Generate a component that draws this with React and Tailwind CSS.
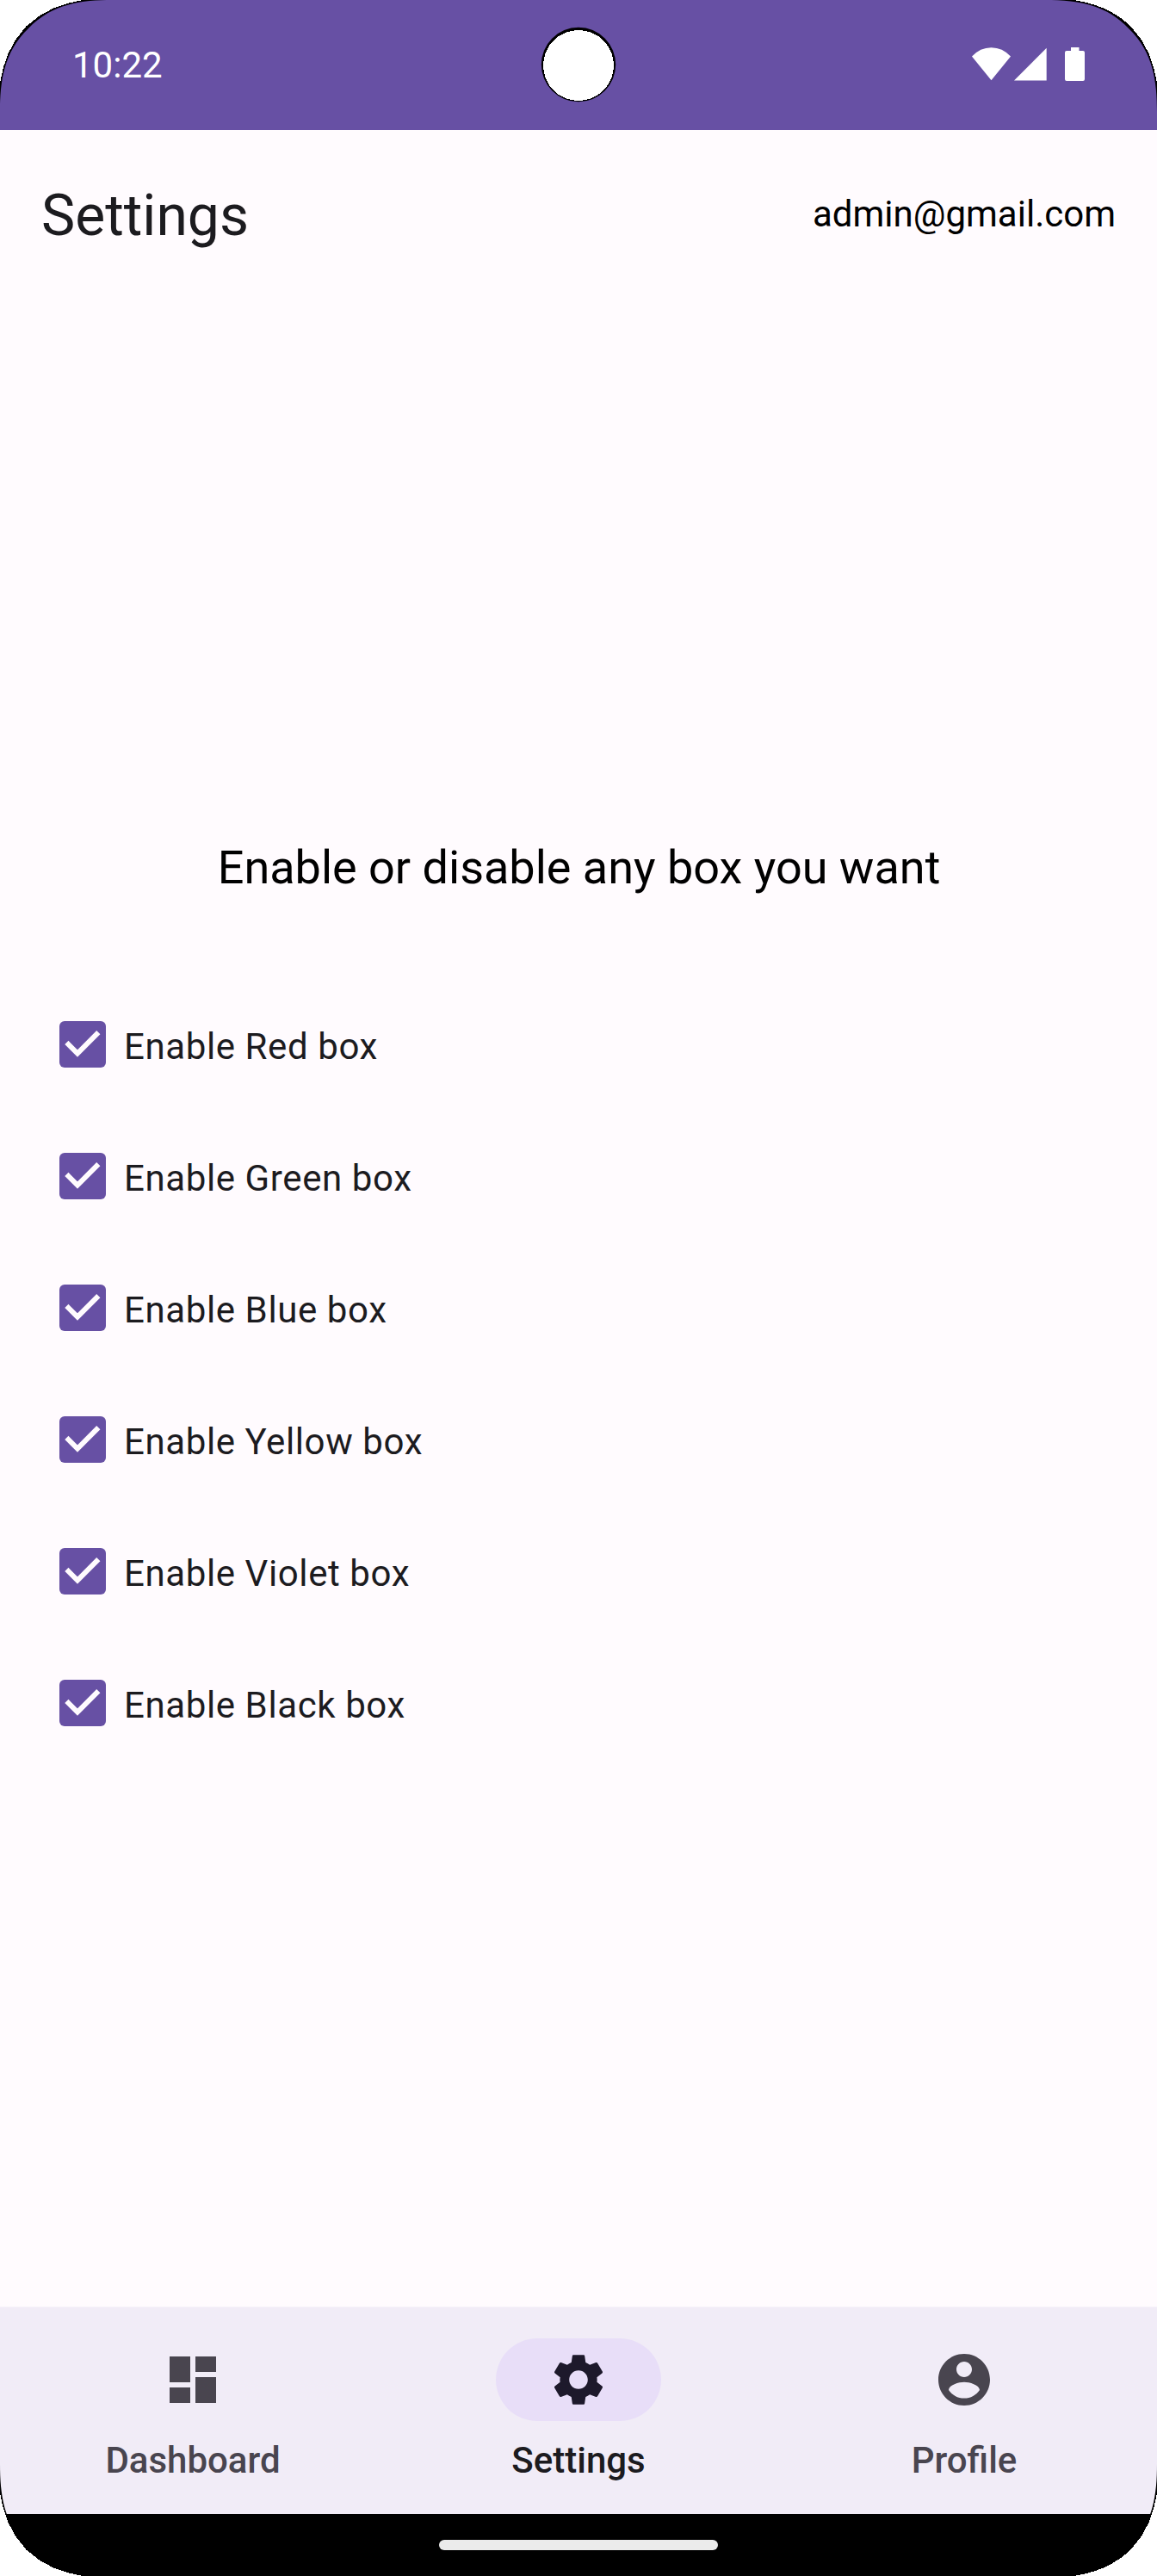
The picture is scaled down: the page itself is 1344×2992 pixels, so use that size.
import React from "react";

const boxes = ["Red", "Green", "Blue", "Yellow", "Violet", "Black"];

const tabs = [
  { label: "Dashboard", icon: "M3 13h8V3H3v10zm0 8h8v-6H3v6zm10 0h8V11h-8v10zm0-18v6h8V3h-8z" },
  {
    label: "Settings",
    active: true,
    icon: "M19.14 12.94c.04-.3.06-.61.06-.94 0-.32-.02-.64-.07-.94l2.03-1.58c.18-.14.23-.41.12-.61l-1.92-3.32c-.12-.22-.37-.29-.59-.22l-2.39.96c-.5-.38-1.03-.7-1.62-.94l-.36-2.54c-.04-.24-.24-.41-.48-.41h-3.84c-.24 0-.43.17-.47.41l-.36 2.54c-.59.24-1.13.57-1.62.94l-2.39-.96c-.22-.08-.47 0-.59.22L2.74 8.87c-.12.21-.08.47.12.61l2.03 1.58c-.05.3-.09.63-.09.94s.02.64.07.94l-2.03 1.58c-.18.14-.23.41-.12.61l1.92 3.32c.12.22.37.29.59.22l2.39-.96c.5.38 1.03.7 1.62.94l.36 2.54c.05.24.24.41.48.41h3.84c.24 0 .44-.17.47-.41l.36-2.54c.59-.24 1.13-.56 1.62-.94l2.39.96c.22.08.47 0 .59-.22l1.92-3.32c.12-.22.07-.47-.12-.61l-2.01-1.58zM12 15.6c-1.98 0-3.6-1.62-3.6-3.6s1.62-3.6 3.6-3.6 3.6 1.62 3.6 3.6-1.62 3.6-3.6 3.6z",
  },
  {
    label: "Profile",
    icon: "M12 2C6.48 2 2 6.48 2 12s4.48 10 10 10 10-4.48 10-10S17.52 2 12 2zm0 3c1.66 0 3 1.34 3 3s-1.34 3-3 3-3-1.34-3-3 1.34-3 3-3zm0 14.2c-2.5 0-4.71-1.28-6-3.22.03-1.99 4-3.08 6-3.08 1.99 0 5.97 1.09 6 3.08-1.29 1.94-3.5 3.22-6 3.22z",
  },
];

function Corner({ className }) {
  return (
    <svg className={`absolute h-[132px] w-[132px] ${className}`} viewBox="0 0 132 132">
      <path d="M0 0H130C95 0 61 4 33 33C4 61 0 95 0 130Z" fill="#000" />
      <path d="M0 0H96C72 4 50 12 30.500 30.500C12 50 4 72 0 96Z" fill="#fff" shapeRendering="crispEdges" />
    </svg>
  );
}

function StatusBar() {
  return (
    <header className="relative flex h-[151px] shrink-0 items-start justify-between bg-[#6750a4] px-[84px] text-white">
      <span className="mt-[51px] text-[42px] leading-[49px]">10:22</span>
      <svg className="absolute left-[627px] top-[30px]" width="90" height="90" viewBox="627 30 90 90">
        <circle cx="672" cy="75" r="43.2" fill="#000" />
        <circle cx="672" cy="76" r="41" fill="#fff" shapeRendering="crispEdges" />
      </svg>
      <svg className="mt-[54px]" width="132" height="42" viewBox="1128 54 132 42" fill="#fff">
        <path d="M1129 65.6Q1138.500 55.300 1151.500 55.300Q1164.500 55.300 1174 65.600L1151.500 93.200Z" />
        <path d="M1178 93.600H1215.700V55.800Z" />
        <path d="M1244 55h9.500v4h4.500q2 0 2 2v31q0 2-2 2h-19q-2 0-2-2v-31q0-2 2-2h5z" />
      </svg>
    </header>
  );
}

function CheckRow({ name }) {
  return (
    <label className="flex h-[54px] items-center">
      <svg className="mr-[21px] h-[54px] w-[54px]" viewBox="0 0 54 54">
        <rect width="54" height="54" rx="6" fill="#6750a4" />
        <path d="M10.500 27L21 37.500L43.200 15.300" fill="none" stroke="#fffbfe" strokeWidth="6" strokeLinecap="square" />
      </svg>
      <span className="mt-[5px] text-[42px] leading-[59px] tracking-[0.6px] text-[#1c1b1f]">
        Enable {name} box
      </span>
    </label>
  );
}

export default function App() {
  return (
    <div className="relative flex h-[2992px] w-[1344px] flex-col overflow-hidden bg-[#fffbfe] font-['Roboto',sans-serif]">
      <StatusBar />
      <div className="flex h-[192px] shrink-0 items-center justify-between px-12">
        <h1 className="mt-[7px] text-[66px] leading-[84px] text-[#1c1b1f]">Settings</h1>
        <span className="mt-[3px] text-[42px] leading-[60px] text-black">admin@gmail.com</span>
      </div>
      <main className="flex flex-1 flex-col pt-[629px]">
        <h2 className="pl-px text-center text-[54px] leading-[71px] text-black">Enable or disable any box you want</h2>
        <div className="mt-[143px] flex flex-col gap-[99px] pl-[69px]">
          {boxes.map((b) => (
            <CheckRow key={b} name={b} />
          ))}
        </div>
      </main>
      <nav className="flex h-[241px] shrink-0 border-t border-[#f6f2f9] bg-[#f1ecf7]">
        {tabs.map((t) => (
          <div key={t.label} className="flex w-[448px] flex-col items-center pt-[36px]">
            <div className={`flex h-24 w-48 items-center justify-center rounded-full ${t.active ? "bg-[#e8def8]" : ""}`}>
              <svg width="72" height="72" viewBox="0 0 24 24" fill={t.active ? "#1d192b" : "#49454f"}>
                <path d={t.icon} />
              </svg>
            </div>
            <span className={`mt-4 text-[42px] font-medium leading-[59px] ${t.active ? "text-[#1c1b1f]" : "text-[#49454f]"}`}>
              {t.label}
            </span>
          </div>
        ))}
      </nav>
      <footer className="flex h-[72px] shrink-0 items-center justify-center bg-black">
        <div className="h-3 w-[324px] rounded-full bg-[#ebebeb]" />
      </footer>
      <Corner className="left-0 top-0" />
      <Corner className="right-0 top-0 -scale-x-100" />
      <Corner className="bottom-0 left-0 -scale-y-100" />
      <Corner className="bottom-0 right-0 -scale-100" />
    </div>
  );
}
